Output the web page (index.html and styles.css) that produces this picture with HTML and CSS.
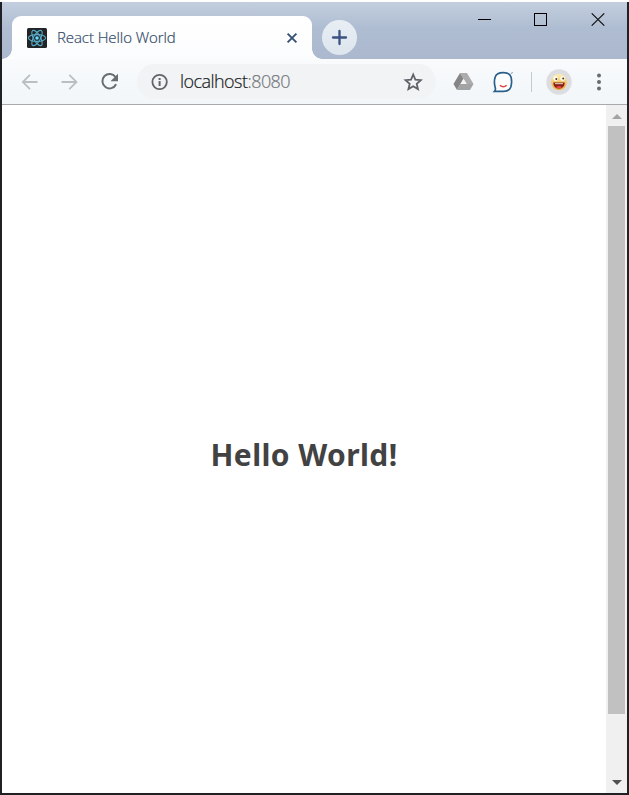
FILE: index.html
```html
<!DOCTYPE html>
<html lang="en">
<head>
<meta charset="utf-8">
<title>React Hello World</title>
<link rel="stylesheet" href="styles.css">
</head>
<body>
<div class="window">
  <header class="chrome">
    <div class="titlebar">
      <div class="corner corner-left"></div>
      <div class="tab">
        <svg class="favicon" width="20" height="20" viewBox="0 0 20 20">
          <rect width="20" height="20" rx="1.5" fill="#222426"/>
          <g fill="none" stroke="#55acc8" stroke-width="1.1">
            <ellipse cx="10" cy="10" rx="8.6" ry="3.4"/>
            <ellipse cx="10" cy="10" rx="8.6" ry="3.4" transform="rotate(60 10 10)"/>
            <ellipse cx="10" cy="10" rx="8.6" ry="3.4" transform="rotate(120 10 10)"/>
          </g>
          <circle cx="10" cy="10" r="1.8" fill="#61dafb"/>
        </svg>
        <span class="tab-title">React Hello World</span>
        <svg class="tab-close" width="12" height="12" viewBox="0 0 12 12"><path d="M1.6 1.6l8.8 8.8M10.4 1.6l-8.8 8.8" stroke="#3b5377" stroke-width="2"/></svg>
      </div>
      <div class="corner corner-right"></div>
      <div class="new-tab">
        <svg width="17" height="17" viewBox="0 0 17 17"><path d="M8.5 2v13M2 8.5h13" stroke="#3c5283" stroke-width="2.3" stroke-linecap="round"/></svg>
      </div>
      <div class="controls">
        <svg width="13" height="13" viewBox="0 0 13 13"><path d="M0 6.5h13" stroke="#000"/></svg>
        <svg width="13" height="13" viewBox="0 0 13 13"><rect x=".5" y=".5" width="12" height="12" fill="none" stroke="#000"/></svg>
        <svg width="14" height="13" viewBox="0 0 14 13"><path d="M.7 .3l12.6 12.4M13.3 .3L.7 12.7" stroke="#111" stroke-width="1.1"/></svg>
      </div>
    </div>
    <div class="toolbar">
      <svg class="nav" width="40" height="20" viewBox="0 0 40 20"><path d="M28.5 10H14M21 2.8L13.8 10l7.2 7.2" fill="none" stroke="#bcbfc2" stroke-width="1.8"/></svg>
      <svg class="nav" width="40" height="20" viewBox="0 0 40 20"><path d="M12.5 10h14.8M20.3 2.8l7.2 7.2-7.2 7.2" fill="none" stroke="#bcbfc2" stroke-width="1.8"/></svg>
      <svg class="nav" width="40" height="20" viewBox="0 0 40 20"><path d="M26.5 5A7.2 7.2 0 1 0 27.1 12.3" fill="none" stroke="#696c70" stroke-width="2"/><path d="M29 1.8v7.4h-7.5z" fill="#696c70"/></svg>
      <div class="address">
        <svg width="18" height="18" viewBox="0 0 18 18"><circle cx="8.6" cy="9" r="7.2" fill="none" stroke="#616569" stroke-width="1.8"/><path d="M8.6 8v5M8.6 5v2" stroke="#616569" stroke-width="2"/></svg>
        <span class="url">localhost<span class="port">:8080</span></span>
        <svg class="star" width="20" height="20" viewBox="0 0 20 20"><path d="M10.2 2.5l2.15 5.1 5.5.5-4.15 3.65 1.25 5.35-4.75-2.85-4.75 2.85 1.25-5.35L2.55 8.1l5.5-.5z" fill="none" stroke="#5f6368" stroke-width="1.8"/></svg>
      </div>
      <svg class="drive" width="21" height="20" viewBox="0 0 21 20">
        <path d="M7 1h7l6.5 11h-6.8z" fill="#acacac"/><path d="M7 1l3.5 5.8L4 18 .5 12z" fill="#858585"/><path d="M7.4 12h13.1L17 18H4z" fill="#a3a3a3"/><path d="M10.5 7l3 5h-6z" fill="#f5f5f5"/>
      </svg>
      <svg class="ghost" width="22" height="22" viewBox="0 0 22 22">
        <path d="M2.5 20.3c.8-.8 1.1-1.8.9-3C2.4 14 2.2 9 3.2 6 4.4 2.5 7 1.7 11.2 1.7s6.8.8 7.8 4.3c.8 3 .7 7-.2 10-1.1 3.3-4 4.3-7.6 4.3z" fill="#fff" stroke="#295f89" stroke-width="1.7"/>
        <path d="M8 14.3c1.9 1.8 4.8 1.8 6.6 0" fill="none" stroke="#e34242" stroke-width="1.5"/><path d="M18.8 2.5l2-1" stroke="#7993aa"/>
      </svg>
      <div class="divider"></div>
      <svg class="avatar" width="26" height="26" viewBox="0 0 26 26">
        <defs><linearGradient id="face" x1="0" y1="0" x2="0" y2="1"><stop offset="0" stop-color="#ffeeb0"/><stop offset="1" stop-color="#eca735"/></linearGradient></defs>
        <circle cx="13" cy="13" r="12.7" fill="#dcdde0"/><circle cx="13" cy="13" r="8" fill="url(#face)"/>
        <circle cx="9.6" cy="9.5" r="2.4" fill="#fffbea"/><circle cx="16.6" cy="9.5" r="2.4" fill="#fffbea"/>
        <circle cx="10.3" cy="10" r="1" fill="#453421"/><circle cx="17.2" cy="9.4" r="1" fill="#453421"/>
        <path d="M7.3 13.5h11.4c0 3.5-2 6-5.7 6s-5.7-2.5-5.7-6z" fill="#852019"/><path d="M9 14h8v1.2H9z" fill="#d9b9a8"/><path d="M10 18c2-1.5 4-1.5 6 0-1.5 1.6-4.5 1.6-6 0z" fill="#ef4545"/>
      </svg>
      <svg class="menu" width="6" height="18" viewBox="0 0 6 18" fill="#686b70"><circle cx="3" cy="2.5" r="2"/><circle cx="3" cy="9" r="2"/><circle cx="3" cy="15.5" r="2"/></svg>
    </div>
  </header>
  <div class="viewport">
    <main class="page"><h1>Hello World!</h1></main>
    <div class="scrollbar">
      <svg width="10" height="5" viewBox="0 0 10 5"><path d="M0 5l5-5 5 5z" fill="#a3a3a3"/></svg>
      <div class="thumb"></div>
      <svg class="down" width="10" height="5" viewBox="0 0 10 5"><path d="M0 0h10L5 5z" fill="#505050"/></svg>
    </div>
  </div>
</div>
</body>
</html>
```
FILE: styles.css
```css
* { box-sizing: border-box; }
svg { display: block; flex: none; }
body {
  margin: 0;
  height: 795px;
  overflow: hidden;
  background: linear-gradient(#fff 2px, #202124 2px);
  font-family: "Open Sans", "Noto Sans", sans-serif;
}
.window {
  display: flex;
  flex-direction: column;
  height: 795px;
  padding: 2px;
}
.chrome {
  height: 103px;
  border-bottom: 1px solid #a7a9ac;
  background: linear-gradient(#fff 14px, #f2f6f9);
}
.titlebar {
  display: flex;
  height: 57px;
  background: linear-gradient(#c3cfde, #afbdd2 45%, #abb8ce);
}
.corner { width: 10px; flex: none; align-self: flex-end; height: 10px; }
.corner-left { background: radial-gradient(circle at 0 0, transparent 9.5px, #fbfcfd 10px); }
.corner-right { background: radial-gradient(circle at 100% 0, transparent 9.5px, #fbfcfd 10px); }
.tab {
  display: flex;
  align-items: center;
  width: 300px;
  height: 43px;
  margin-top: 14px;
  padding: 0 14px 0 15px;
  border-radius: 9px 9px 0 0;
  background: linear-gradient(#fff, #fbfcfd);
}
.tab-title {
  margin: 0 0 2px 10px;
  font-size: 15px;
  font-weight: 300;
  line-height: 20px;
  letter-spacing: -0.08px;
  color: #304968;
  -webkit-text-stroke: 0.2px #304968;
  white-space: nowrap;
}
.tab-close { margin-left: auto; }
.new-tab {
  display: grid;
  place-items: center;
  width: 35px;
  height: 35px;
  margin-top: 18px;
  border-radius: 50%;
  background: linear-gradient(#e8eef4, #dde5ed);
}
.controls {
  display: flex;
  gap: 43px;
  margin: 11px 22px 0 auto;
}
.controls svg:nth-child(-n+2) { margin-left: -1px; margin-right: 1px; }
.toolbar {
  display: flex;
  align-items: center;
  height: 45px;
  padding-left: 7px;
}
.address {
  display: flex;
  align-items: center;
  width: 299px;
  height: 35px;
  margin-left: 8px;
  padding: 0 13px 0 14px;
  border-radius: 18px;
  background: #f1f3f4;
}
.url {
  margin: 0 0 2px 11px;
  font-size: 18px;
  font-weight: 300;
  line-height: 24px;
  letter-spacing: -0.55px;
  color: #17191c;
  -webkit-text-stroke: 0.2px;
}
.port { color: #74787c; }
.star { margin-left: auto; }
.drive { margin-left: 17px; }
.ghost { margin-left: 18px; }
.divider { width: 1px; height: 20px; margin-left: 17px; background: #c7cacd; }
.avatar { margin-left: 14px; }
.menu { margin-left: 24px; }
.viewport { display: flex; flex: 1; min-height: 0; }
.page {
  display: flex;
  align-items: center;
  justify-content: center;
  flex: 1;
  background: #fff;
}
h1 {
  margin: 12px 0 0;
  font-family: "Noto Sans", sans-serif;
  font-size: 30px;
  line-height: 40px;
  letter-spacing: 0.4px;
  color: #424242;
  white-space: nowrap;
}
.scrollbar {
  display: flex;
  flex-direction: column;
  align-items: center;
  width: 21px;
  padding: 9px 0 8px;
  background: #f0f0f0;
}
.thumb { width: 17px; height: 588px; margin-top: 7px; background: #c1c1c1; }
.down { margin-top: auto; }
```
